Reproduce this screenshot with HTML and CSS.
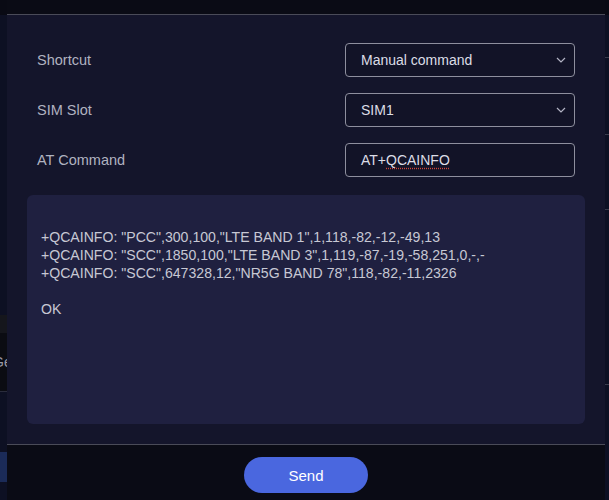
FILE: index.html
```html
<!DOCTYPE html>
<html lang="en">
<head>
    <meta charset="UTF-8">
    <meta name="viewport" content="width=device-width, initial-scale=1.0">
    <title>AT Command</title>
    <link rel="stylesheet" href="styles.css">
</head>
<body>
    <div class="screen">
        <div class="edge edge-left">
            <div class="edge-top"></div>
            <div class="edge-nav"></div>
            <div class="edge-band"></div>
            <div class="edge-label">Ge</div>
            <div class="edge-nav short"></div>
            <div class="edge-btn"></div>
        </div>

        <div class="modal">
            <div class="modal-head"></div>

            <div class="modal-body">
                <div class="form-row">
                    <label>Shortcut</label>
                    <div class="field select">
                        <span>Manual command</span>
                        <svg width="10" height="6" viewBox="0 0 10 6"><path d="M1 1l4 4 4-4" fill="none" stroke="#b3b4c4" stroke-width="1.2"/></svg>
                    </div>
                </div>

                <div class="form-row">
                    <label>SIM Slot</label>
                    <div class="field select">
                        <span>SIM1</span>
                        <svg width="10" height="6" viewBox="0 0 10 6"><path d="M1 1l4 4 4-4" fill="none" stroke="#b3b4c4" stroke-width="1.2"/></svg>
                    </div>
                </div>

                <div class="form-row">
                    <label>AT Command</label>
                    <div class="field">
                        <span>AT+<span class="typo">QCAINFO</span></span>
                    </div>
                </div>

                <pre class="output">

+QCAINFO: "PCC",300,100,"LTE BAND 1",1,118,-82,-12,-49,13
+QCAINFO: "SCC",1850,100,"LTE BAND 3",1,119,-87,-19,-58,251,0,-,-
+QCAINFO: "SCC",647328,12,"NR5G BAND 78",118,-82,-11,2326

OK</pre>
            </div>

            <div class="modal-foot">
                <button>Send</button>
            </div>
        </div>

        <div class="edge edge-right">
            <div class="edge-top"></div>
            <div class="edge-row r1"></div>
            <div class="edge-row r2"></div>
            <div class="edge-row r3"></div>
            <div class="edge-row r4"></div>
        </div>
    </div>
</body>
</html>
```

FILE: styles.css
```css
body {
    margin: 0;
    background: #0a0b15;
    font-family: "Liberation Sans", Arial, sans-serif;
    font-size: 14px;
}

.screen {
    display: flex;
    height: 500px;
    overflow: hidden;
}

/* page behind the modal */
.edge {
    flex-shrink: 0;
    display: flex;
    flex-direction: column;
    overflow: hidden;
    background: #0d1023;
}

.edge-left {
    width: 7px;
}

.edge-right {
    width: 4px;
}

.edge-top {
    height: 15px;
    background: #090a14;
}

.edge-nav {
    height: 300px;
}

.edge-nav.short {
    height: 55px;
    border-top: 1px solid #2a2c3c;
}

.edge-band {
    height: 18px;
    background: #15161c;
}

.edge-label {
    height: 58px;
    line-height: 58px;
    margin-left: -7px;
    white-space: nowrap;
    color: #9a9aa6;
    background: #0b0c12;
}

.edge-btn {
    height: 30px;
    margin-top: 5px;
    background: #1b2b58;
}

.edge-row {
    border-bottom: 1px solid #3a3c4c;
}

.edge-row.r1 { height: 42px; }
.edge-row.r2 { height: 76px; }
.edge-row.r3 { height: 74px; }
.edge-row.r4 { height: 174px; }

/* modal */
.modal {
    width: 598px;
    flex-shrink: 0;
    display: flex;
    flex-direction: column;
    background: #14152b;
}

.modal-head {
    height: 14px;
    background: #0a0b15;
    border-bottom: 1px solid #4a4b58;
}

.modal-body {
    padding: 28px 20px 20px 20px;
    display: flex;
    flex-direction: column;
    gap: 16px;
}

.form-row {
    display: flex;
    justify-content: space-between;
    align-items: center;
    padding: 0 10px;
}

label {
    color: #b0b2c0;
    font-size: 14.5px;
}

.field {
    width: 230px;
    height: 34px;
    box-sizing: border-box;
    display: flex;
    align-items: center;
    justify-content: space-between;
    padding: 0 8px 0 15px;
    border: 1px solid #8e8f9e;
    border-radius: 4px;
    background: #121327;
    color: #dcdde6;
}

.typo {
    text-decoration: underline dotted #d0463e;
    text-underline-offset: 3px;
}

.output {
    margin: 2px 0 0;
    height: 229px;
    box-sizing: border-box;
    padding: 15px 14px;
    background: #1f2040;
    border-radius: 6px;
    color: #c7c8d4;
    font-family: "Liberation Sans", Arial, sans-serif;
    font-size: 14.1px;
    line-height: 18px;
}

.modal-foot {
    flex: 1;
    display: flex;
    justify-content: center;
    padding-top: 12px;
    background: #0a0b15;
    border-top: 1px solid #4a4b58;
}

button {
    width: 124px;
    height: 36px;
    border: none;
    border-radius: 18px;
    background: #4a67df;
    color: white;
    font-family: "Liberation Sans", Arial, sans-serif;
    font-size: 15px;
    cursor: pointer;
}
```
